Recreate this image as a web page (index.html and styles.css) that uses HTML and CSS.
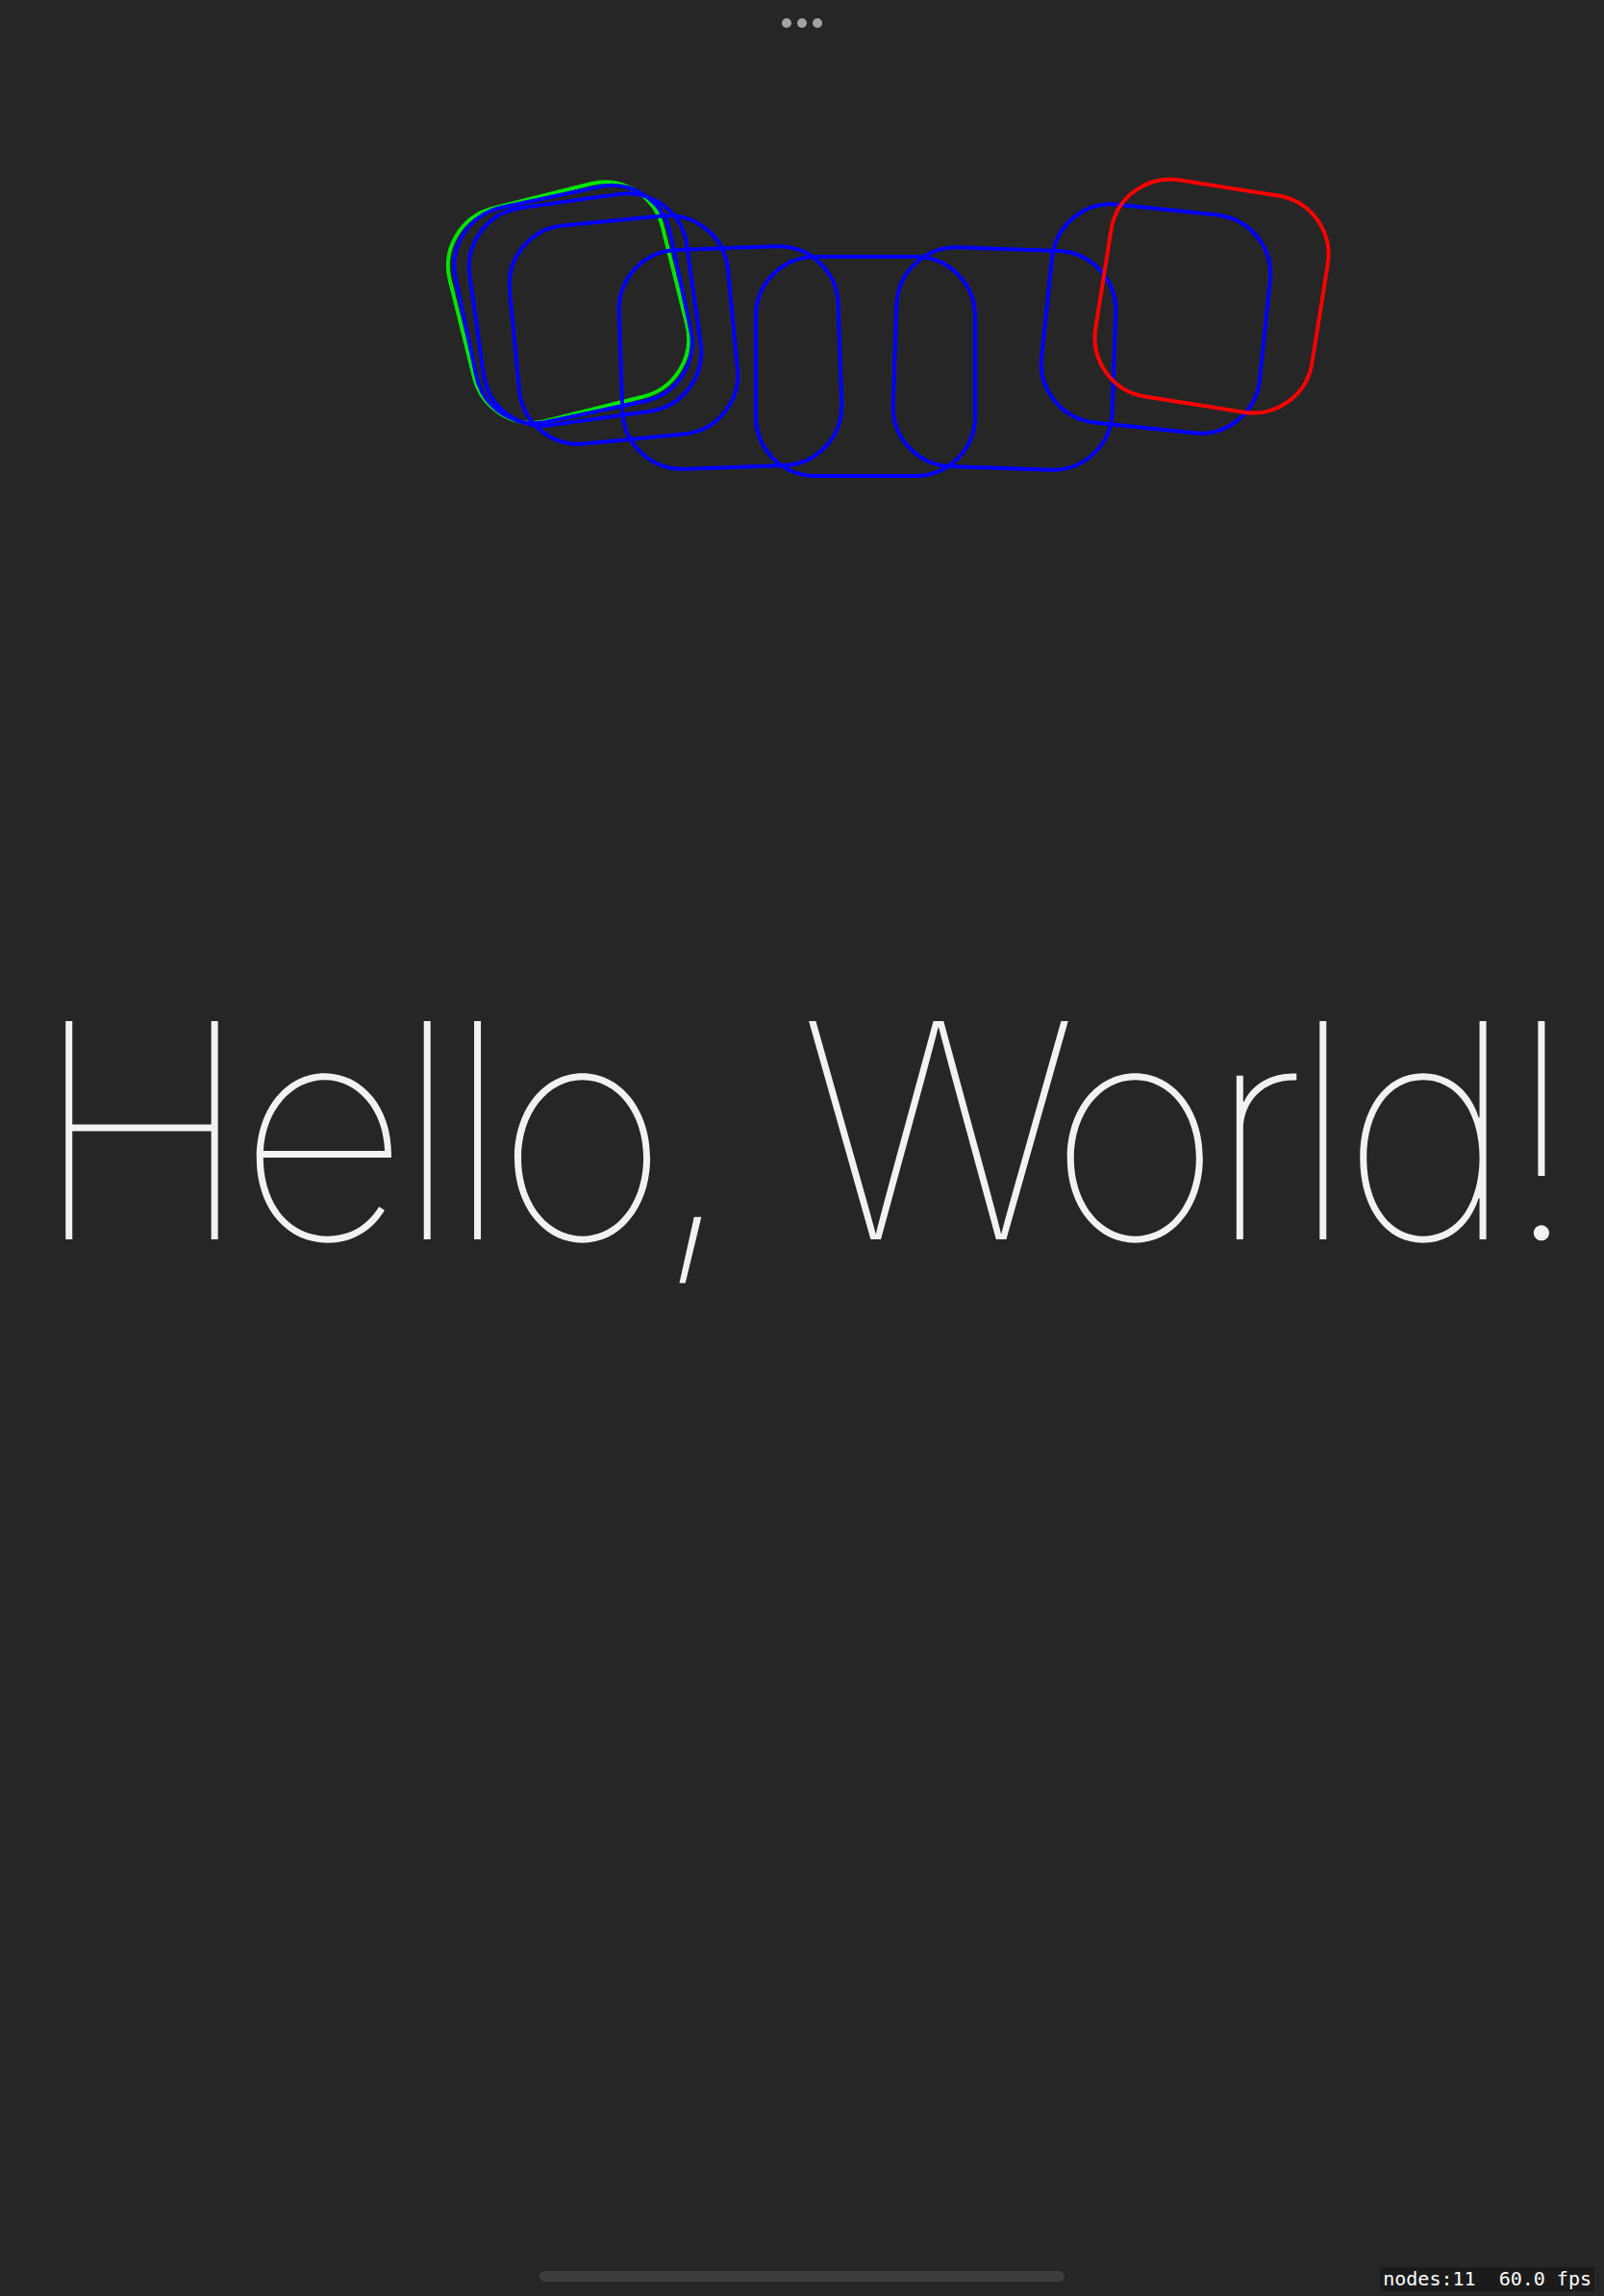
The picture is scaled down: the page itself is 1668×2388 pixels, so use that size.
FILE: index.html
```html
<!DOCTYPE html>
<html lang="en">
<head>
<meta charset="utf-8">
<title>Hello, World!</title>
<link rel="stylesheet" href="styles.css">
</head>
<body>
<main class="screen">
  <div class="topbar">
    <span class="dot"></span><span class="dot"></span><span class="dot"></span>
  </div>
  <svg class="stage" width="1668" height="500" viewBox="0 48 1668 500" xmlns="http://www.w3.org/2000/svg">
    <g fill="none" stroke-width="4">
      <rect class="node node-first" x="-114" y="-114" width="228" height="228" rx="62" transform="translate(591 314.5) rotate(-14)"/>
      <rect class="node" x="-114" y="-114" width="228" height="228" rx="62" transform="translate(596 316.5) rotate(-12)"/>
      <rect class="node" x="-114" y="-114" width="228" height="228" rx="62" transform="translate(608.5 322) rotate(-8)"/>
      <rect class="node" x="-114" y="-114" width="228" height="228" rx="62" transform="translate(648.5 343) rotate(-5.5)"/>
      <rect class="node" x="-114" y="-114" width="228" height="228" rx="62" transform="translate(759.5 372) rotate(-2)"/>
      <rect class="node" x="-114" y="-114" width="228" height="228" rx="62" transform="translate(900 381) rotate(0)"/>
      <rect class="node" x="-114" y="-114" width="228" height="228" rx="62" transform="translate(1044.5 373) rotate(2)"/>
      <rect class="node" x="-114" y="-114" width="228" height="228" rx="62" transform="translate(1202 331.5) rotate(6)"/>
      <rect class="node node-last" x="-114" y="-114" width="228" height="228" rx="62" transform="translate(1260 308) rotate(9)"/>
    </g>
  </svg>
  <h1 class="headline">Hello, World!</h1>
  <div class="fill"></div>
  <div class="home-indicator"></div>
  <div class="stats">nodes:11  60.0 fps</div>
</main>
</body>
</html>
```
FILE: styles.css
```css
html, body {
  margin: 0;
  padding: 0;
  background: #262626;
}

.screen {
  position: relative;
  width: 1668px;
  height: 2388px;
  display: flex;
  flex-direction: column;
  align-items: center;
  overflow: hidden;
  background: #262626;
}

.topbar {
  height: 48px;
  display: flex;
  align-items: center;
  justify-content: center;
  gap: 6px;
  flex: none;
}

.dot {
  width: 10px;
  height: 10px;
  border-radius: 50%;
  background: #a3a3a3;
}

.stage {
  display: block;
  flex: none;
}

.node {
  stroke: #0000ff;
}

.node-first {
  stroke: #00e400;
}

.node-last {
  stroke: #ff0000;
}

.headline {
  margin: 472px 0 0 0;
  padding-right: 5px;
  font-family: "Inter", "Liberation Sans", sans-serif;
  font-weight: 100;
  font-size: 312px;
  line-height: 1;
  letter-spacing: -15px;
  word-spacing: 8px;
  color: #f2f2f2;
  white-space: nowrap;
  text-align: center;
  flex: none;
}

.fill {
  flex: 1;
}

.home-indicator {
  width: 546px;
  height: 11px;
  border-radius: 6px;
  background: #3d3d3d;
  margin-bottom: 15px;
  flex: none;
}

.stats {
  position: absolute;
  right: 10px;
  bottom: 5px;
  height: 25px;
  padding: 0 3px;
  background: #1b1b1b;
  color: #ffffff;
  font-family: "DejaVu Sans Mono", monospace;
  font-size: 20px;
  line-height: 25px;
  white-space: pre;
}
```
